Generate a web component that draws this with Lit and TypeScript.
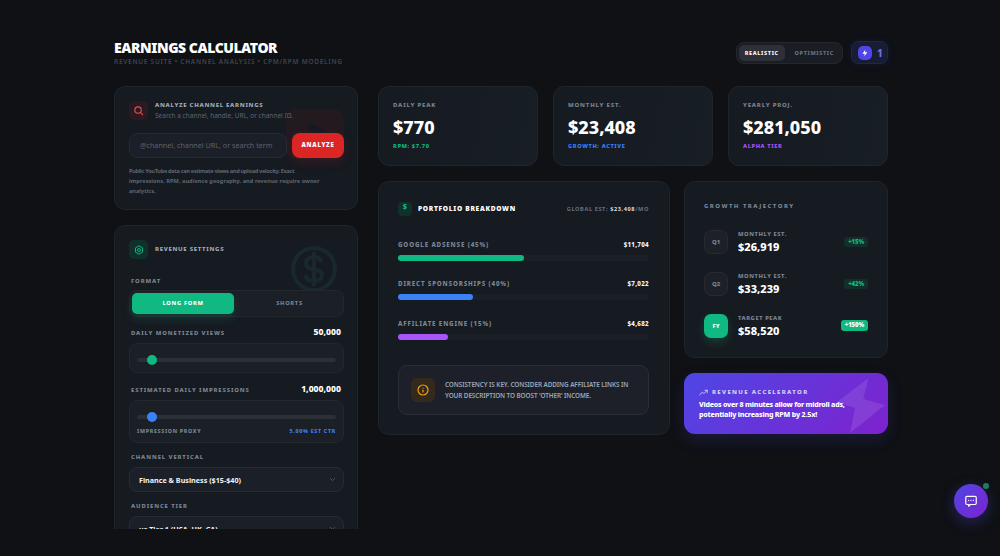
import { LitElement, html, css, svg } from "lit";
import { customElement } from "lit/decorators.js";

const rows = [
  { l: "GOOGLE ADSENSE (45%)", v: "$11,704", w: 50, c: "#10b981" },
  { l: "DIRECT SPONSORSHIPS (40%)", v: "$7,022", w: 30, c: "#3b82f6" },
  { l: "AFFILIATE ENGINE (15%)", v: "$4,682", w: 20, c: "#a855f7" },
];
const growth = [
  { k: "Q1", l: "MONTHLY EST.", v: "$26,919", b: "+15%", hi: false },
  { k: "Q2", l: "MONTHLY EST.", v: "$33,239", b: "+42%", hi: false },
  { k: "FY", l: "TARGET PEAK", v: "$58,520", b: "+150%", hi: true },
];
const chev = svg`<path d="M6 9l6 6 6-6" fill="none" stroke="currentColor" stroke-width="2" stroke-linecap="round" stroke-linejoin="round"/>`;

@customElement("app-root")
export class AppRoot extends LitElement {
  static styles = css`
    :host { display: block; height: 556px; overflow: hidden; background: #0f1115; font-family: "Noto Sans", sans-serif; color: #fff; position: relative; }
    * { box-sizing: border-box; }
    .page { width: 774px; margin-left: 114px; padding-top: 40px; }
    header { display: flex; justify-content: space-between; align-items: flex-start; height: 46px; }
    h1 { margin: 0; font-size: 14px; line-height: 15px; font-weight: 900; letter-spacing: -0.45px; }
    .sub { font-size: 6.5px; line-height: 10px; margin-top: 2px; font-weight: 600; letter-spacing: .72px; color: #3f444e; }
    .hr { display: flex; gap: 8px; margin-top: 1px; }
    .mode { width: 107px; height: 22px; margin-top: 1px; border: 1px solid #24272e; background: #1a1d23; border-radius: 8px; padding: 2px; display: flex; align-items: center; }
    .mode span { font-size: 5.5px; font-weight: 800; letter-spacing: .65px; color: #6b7280; padding: 0 6px; line-height: 16px; border-radius: 5px; }
    .mode .on { background: #2d3036; color: #fff; width: 47px; padding: 0; text-align: center; margin-right: 4px; }
    .bolt { width: 37px; height: 23px; border: 1px solid #20234a; background: #191c35; border-radius: 7px; display: flex; align-items: center; gap: 5px; padding-left: 6px; color: #6d70e8; font-size: 10px; font-weight: 800; box-shadow: 0 0 10px rgba(79,70,229,.1); }
    .bolt i { width: 14px; height: 14px; border-radius: 5px; background: #4f46e5; display: flex; align-items: center; justify-content: center; }
    .main { display: flex; gap: 20px; align-items: flex-start; }
    .left { width: 244px; flex: none; height: 443px; overflow: hidden; display: flex; flex-direction: column; gap: 15px; }
    .right { flex: 1; min-width: 0; display: flex; flex-direction: column; gap: 15px; }
    .card { background: #161a21; border: 1px solid #20242b; border-radius: 11px; position: relative; overflow: hidden; }
    .analyze { height: 124px; flex: none; padding: 14px 13px 0 14px; }
    .head { display: flex; gap: 7px; align-items: center; position: relative; height: 19px; }
    .ico { width: 19px; height: 19px; border-radius: 5px; display: flex; align-items: center; justify-content: center; flex: none; }
    .t { font-size: 6px; line-height: 9px; font-weight: 800; letter-spacing: .7px; color: #a3acba; }
    .desc { font-size: 6.5px; line-height: 10px; color: #5e6672; margin-top: 1px; }
    .wm { position: absolute; }
    .searchrow { display: flex; gap: 5px; margin-top: 13px; position: relative; }
    .input { width: 158px; height: 25px; border: 1px solid #272b33; background: #1b1f27; border-radius: 8px; font-size: 7.2px; line-height: 23px; padding-left: 10px; color: #5b626e; }
    .btn { width: 52px; height: 25px; background: #dc2626; border-radius: 8px; font-size: 6px; font-weight: 900; letter-spacing: .7px; line-height: 25px; text-align: center; box-shadow: 0 4px 12px rgba(220,38,38,.15); }
    .note { font-size: 5.6px; line-height: 10px; font-weight: 700; color: #5e6672; margin-top: 8px; position: relative; }
    .note span { display: block; white-space: nowrap; }
    .note .n1 { letter-spacing: -.3px; }
    .note .n2 { letter-spacing: .05px; }
    .settings { flex: none; height: 400px; padding: 14px 13px 14px 14px; }
    .lab { font-size: 5.9px; line-height: 9px; font-weight: 800; letter-spacing: .9px; color: #7d8694; }
    .field { display: flex; justify-content: space-between; align-items: flex-end; padding: 0 3px 0 2px; }
    .f1 { margin-top: 18px; }
    .f2 { margin-top: 9.5px; }
    .f3 { margin-top: 10.5px; }
    .f4 { margin-top: 10px; }
    .val { font-size: 8.6px; line-height: 11px; font-weight: 800; color: #fff; }
    .seg { height: 27px; border: 1px solid #23272e; background: #1b1f26; border-radius: 8px; padding: 2px; display: flex; margin-top: 4px; position: relative; }
    .seg span { flex: 1; font-size: 5.7px; font-weight: 800; letter-spacing: .7px; line-height: 21px; height: 21px; text-align: center; color: #7a8290; border-radius: 5px; padding-left: 4px; }
    .seg .on { flex: 0 0 102px; margin-left: 0; padding-left: 0; background: #10b981; color: #fff; box-shadow: 0 5px 10px rgba(16,185,129,.18); }
    .well { border: 1px solid #23272e; background: #1b1f26; border-radius: 8px; padding: 14px 7px 0; margin-top: 5.5px; }
    .well.a { height: 30px; }
    .well.b { height: 43px; }
    .slider { height: 4px; background: #2b2f36; border-radius: 2px; position: relative; }
    .slider b { position: absolute; left: 10px; top: -3px; width: 10px; height: 10px; border-radius: 50%; }
    .g { background: #10b981; }
    .bl { background: #3b82f6; }
    .sm { display: flex; justify-content: space-between; font-size: 5.3px; line-height: 8px; font-weight: 800; letter-spacing: .7px; color: #7d8694; margin-top: 8px; }
    .sm em { font-style: normal; color: #3b82f6; }
    .select { height: 25px; border: 1px solid #272b33; background: #1b1f27; border-radius: 8px; display: flex; justify-content: space-between; align-items: center; padding: 0 6px 0 9px; font-size: 7.2px; font-weight: 700; color: #f0f2f5; margin-top: 5px; flex: none; }
    .select svg { width: 9px; height: 9px; color: #5e6672; }
    .stats { display: flex; gap: 15px; }
    .stat { flex: 1; height: 80px; padding: 14px; background: linear-gradient(100deg, #161a21, #181e26); }
    .stat .lbl { font-size: 6px; line-height: 9px; font-weight: 800; letter-spacing: .8px; color: #7b8390; }
    .stat .num { font-size: 18px; line-height: 22px; font-weight: 800; margin-top: 6px; }
    .stat .foot { font-size: 5.7px; line-height: 8px; font-weight: 800; letter-spacing: .6px; margin-top: 4px; }
    .lower { display: flex; gap: 14px; align-items: flex-start; }
    .port { width: 292px; flex: none; height: 254px; padding: 19px 20px 19px 19px; }
    .phead { display: flex; align-items: center; justify-content: space-between; height: 15px; }
    .phead > div { display: flex; align-items: center; gap: 6px; font-size: 6.6px; font-weight: 900; letter-spacing: .7px; }
    .phead .mini { display: flex; width: 14px; height: 14px; border-radius: 4px; background: #10302b; color: #10b981; justify-content: center; font-size: 6.5px; letter-spacing: 0; gap: 0; }
    .phead em { font-style: normal; font-size: 5.6px; font-weight: 700; letter-spacing: .6px; color: #697180; }
    .phead em u { text-decoration: none; color: #d8dce2; }
    .bars { margin-top: 24px; display: flex; flex-direction: column; gap: 18.3px; }
    .barhead { display: flex; justify-content: space-between; font-size: 6.2px; line-height: 9px; font-weight: 800; letter-spacing: .85px; color: #7d8694; }
    .barhead b { color: #f2f3f5; letter-spacing: .3px; font-weight: 800; }
    .track { height: 6px; background: #1b1f27; border-radius: 3px; margin-top: 6px; }
    .track div { height: 6px; border-radius: 3px; }
    .tip { margin-top: 25px; height: 50px; border: 1px solid #2a2e36; background: #1d2028; border-radius: 9px; display: flex; align-items: center; gap: 10px; padding: 0 14px 0 12px; }
    .tip .i { width: 24px; height: 24px; background: #33291c; border-radius: 6px; display: flex; align-items: center; justify-content: center; flex: none; }
    .tip p { margin: 0; font-size: 6.4px; line-height: 11px; font-weight: 600; color: #9aa7b8; letter-spacing: -.1px; }
    .col { flex: 1; min-width: 0; display: flex; flex-direction: column; gap: 15px; }
    .growth { height: 177px; padding: 20px 19px 0; }
    .gt { font-size: 6px; line-height: 8px; font-weight: 800; letter-spacing: 1.45px; color: #7d8694; }
    .grow { display: flex; align-items: center; height: 24px; margin-top: 18px; }
    .gt + .grow { margin-top: 19.5px; }
    .k { width: 24px; height: 24px; border: 1px solid #262a32; background: #1d2027; border-radius: 7px; font-size: 6px; font-weight: 800; line-height: 22px; text-align: center; color: #7d8694; flex: none; }
    .k.hi { background: #10b981; border: 0; line-height: 24px; color: #fff; box-shadow: 0 4px 10px rgba(16,185,129,.25); }
    .gi { margin-left: 10px; flex: 1; margin-top: 1px; }
    .gi small { display: block; font-size: 5.8px; line-height: 8px; font-weight: 800; letter-spacing: .55px; color: #7d8694; }
    .gi span { display: block; font-size: 11px; line-height: 14px; font-weight: 800; margin-top: 2px; }
    .pill { height: 10px; border-radius: 3px; background: #11302b; color: #10b981; font-size: 6px; line-height: 10px; font-weight: 900; padding: 0 4px; letter-spacing: -.1px; }
    .pill.hi { background: #10b981; color: #fff; height: 11px; line-height: 11px; }
    .acc { height: 61px; border: 0; background: linear-gradient(135deg, #4f46e5, #7e22ce); box-shadow: 0 6px 16px rgba(79,70,229,.16); padding: 15px 15px 0; overflow: visible; }
    .acc .top { display: flex; align-items: center; gap: 4px; font-size: 6px; line-height: 9px; font-weight: 800; letter-spacing: 1.35px; color: #d6d3f6; position: relative; }
    .acc p { margin: 3px 0 0; font-size: 7.1px; line-height: 9.5px; font-weight: 800; position: relative; }
    .acc p span { display: block; white-space: nowrap; }
    .acc p .a1 { letter-spacing: -.25px; }
    .acc p .a2 { letter-spacing: -.2px; }
    .acc svg.z { position: absolute; left: 0; top: 0; }
    .chat { position: absolute; left: 954px; top: 484px; width: 34px; height: 34px; border-radius: 50%; background: linear-gradient(135deg, #4f46e5, #7e22ce); display: flex; align-items: center; justify-content: center; box-shadow: 0 4px 14px rgba(79,70,229,.35); }
    .dot { position: absolute; right: -1px; top: -1px; width: 6px; height: 6px; border-radius: 50%; background: #1c7e5f; }
  `;
  render() {
    return html`<div class="page">
      <header>
        <div><h1>EARNINGS CALCULATOR</h1><div class="sub">REVENUE SUITE • CHANNEL ANALYSIS • CPM/RPM MODELING</div></div>
        <div class="hr">
          <div class="mode"><span class="on">REALISTIC</span><span>OPTIMISTIC</span></div>
          <div class="bolt"><i><svg width="8" height="8" viewBox="0 0 24 24" fill="#fff"><path d="M13 2L4 14h7l-1 8 9-12h-7z"/></svg></i>1</div>
        </div>
      </header>
      <div class="main">
        <div class="left">
          <section class="card analyze">
            <svg class="wm" style="right:13px;top:18px" width="58" height="58" viewBox="0 0 58 58"><rect x="0" y="4" width="58" height="50" rx="10" fill="#231a20"/><path d="M22 16l20 12-20 12z" fill="#161a21"/></svg>
            <div class="head">
              <div class="ico" style="background:#2c1a20"><svg width="11" height="11" viewBox="0 0 24 24" fill="none" stroke="#e0525a" stroke-width="2.4" stroke-linecap="round"><circle cx="11" cy="11" r="7"/><path d="M21 21l-5-5"/></svg></div>
              <div><div class="t">ANALYZE CHANNEL EARNINGS</div><div class="desc">Search a channel, handle, URL, or channel ID.</div></div>
            </div>
            <div class="searchrow"><div class="input">@channel, channel URL, or search term</div><div class="btn">ANALYZE</div></div>
            <div class="note"><span class="n1">Public YouTube data can estimate views and upload velocity. Exact</span> <span class="n2">impressions, RPM, audience geography, and revenue require owner</span> <span>analytics.</span></div>
          </section>
          <section class="card settings">
            <svg class="wm" style="right:19px;top:19px" width="48" height="48" viewBox="0 0 48 48" fill="none" stroke="#19282b" stroke-width="4"><circle cx="24" cy="24" r="21"/><path d="M31 16c-1-3-4-4-7-4-4 0-8 2-8 6 0 9 16 4 16 12 0 4-4 6-8 6-3 0-7-1-8-4M24 8v32" stroke-linecap="round"/></svg>
            <div class="head">
              <div class="ico" style="background:#10302b"><svg width="10" height="10" viewBox="0 0 24 24" fill="none" stroke="#10b981" stroke-width="2.4"><path d="M12 2l8.5 5v10L12 22l-8.5-5V7z"/><circle cx="12" cy="12" r="3.5"/></svg></div>
              <div class="t">REVENUE SETTINGS</div>
            </div>
            <div class="field f1"><span class="lab">FORMAT</span></div>
            <div class="seg"><span class="on">LONG FORM</span><span>SHORTS</span></div>
            <div class="field f2"><span class="lab">DAILY MONETIZED VIEWS</span><span class="val">50,000</span></div>
            <div class="well a"><div class="slider"><b class="g"></b></div></div>
            <div class="field f3"><span class="lab">ESTIMATED DAILY IMPRESSIONS</span><span class="val">1,000,000</span></div>
            <div class="well b"><div class="slider"><b class="bl"></b></div><div class="sm"><span>IMPRESSION PROXY</span><em>5.00% EST CTR</em></div></div>
            <div class="field f4"><span class="lab">CHANNEL VERTICAL</span></div>
            <div class="select"><span>Finance &amp; Business ($15-$40)</span><svg viewBox="0 0 24 24">${chev}</svg></div>
            <div class="field f4"><span class="lab">AUDIENCE TIER</span></div>
            <div class="select"><span>us Tier 1 (USA, UK, CA)</span><svg viewBox="0 0 24 24">${chev}</svg></div>
          </section>
        </div>
        <div class="right">
          <div class="stats">
            <div class="card stat"><div class="lbl">DAILY PEAK</div><div class="num">$770</div><div class="foot" style="color:#10b981">RPM: $7.70</div></div>
            <div class="card stat"><div class="lbl">MONTHLY EST.</div><div class="num">$23,408</div><div class="foot" style="color:#3b82f6">GROWTH: ACTIVE</div></div>
            <div class="card stat"><div class="lbl">YEARLY PROJ.</div><div class="num">$281,050</div><div class="foot" style="color:#a855f7">ALPHA TIER</div></div>
          </div>
          <div class="lower">
            <section class="card port">
              <div class="phead"><div><span class="mini">$</span>PORTFOLIO BREAKDOWN</div><em>GLOBAL EST: <u>$23,408</u>/MO</em></div>
              <div class="bars">${rows.map(r => html`<div><div class="barhead"><span>${r.l}</span><b>${r.v}</b></div><div class="track"><div style="width:${r.w}%;background:${r.c}"></div></div></div>`)}</div>
              <div class="tip"><div class="i"><svg width="12" height="12" viewBox="0 0 24 24" fill="none" stroke="#f59e0b" stroke-width="2.4" stroke-linecap="round"><circle cx="12" cy="12" r="10"/><path d="M12 16v-4M12 8h.01"/></svg></div><p>CONSISTENCY IS KEY. CONSIDER ADDING AFFILIATE LINKS IN YOUR DESCRIPTION TO BOOST 'OTHER' INCOME.</p></div>
            </section>
            <div class="col">
              <section class="card growth">
                <div class="gt">GROWTH TRAJECTORY</div>
                ${growth.map(g => html`<div class="grow"><div class="k ${g.hi ? "hi" : ""}">${g.k}</div><div class="gi"><small>${g.l}</small><span>${g.v}</span></div><div class="pill ${g.hi ? "hi" : ""}">${g.b}</div></div>`)}
              </section>
              <section class="card acc">
                <svg class="z" width="204" height="61" viewBox="0 0 204 61"><path d="M184.3 5.3L152.7 29.3 171 35 166 60 201 32 179.3 26z" fill="#fff" fill-opacity=".1"/></svg>
                <div class="top"><svg width="9" height="9" viewBox="0 0 24 24" fill="none" stroke="#d6d3f6" stroke-width="2.4" stroke-linecap="round" stroke-linejoin="round"><path d="M2 18l7-7 4 4 9-9M16 6h6v6"/></svg>REVENUE ACCELERATOR</div>
                <p><span class="a1">Videos over 8 minutes allow for midroll ads,</span> <span class="a2">potentially increasing RPM by 2.5x!</span></p>
              </section>
            </div>
          </div>
        </div>
      </div>
    </div>
    <div class="chat"><span class="dot"></span><svg width="14" height="14" viewBox="0 0 24 24" fill="none" stroke="#fff" stroke-width="2" stroke-linejoin="round"><path d="M5 4h14a2 2 0 0 1 2 2v10a2 2 0 0 1-2 2h-8l-3 3v-3H5a2 2 0 0 1-2-2V6a2 2 0 0 1 2-2z"/><path d="M8 11h.01M12 11h.01M16 11h.01" stroke-linecap="round"/></svg></div>`;
  }
}
